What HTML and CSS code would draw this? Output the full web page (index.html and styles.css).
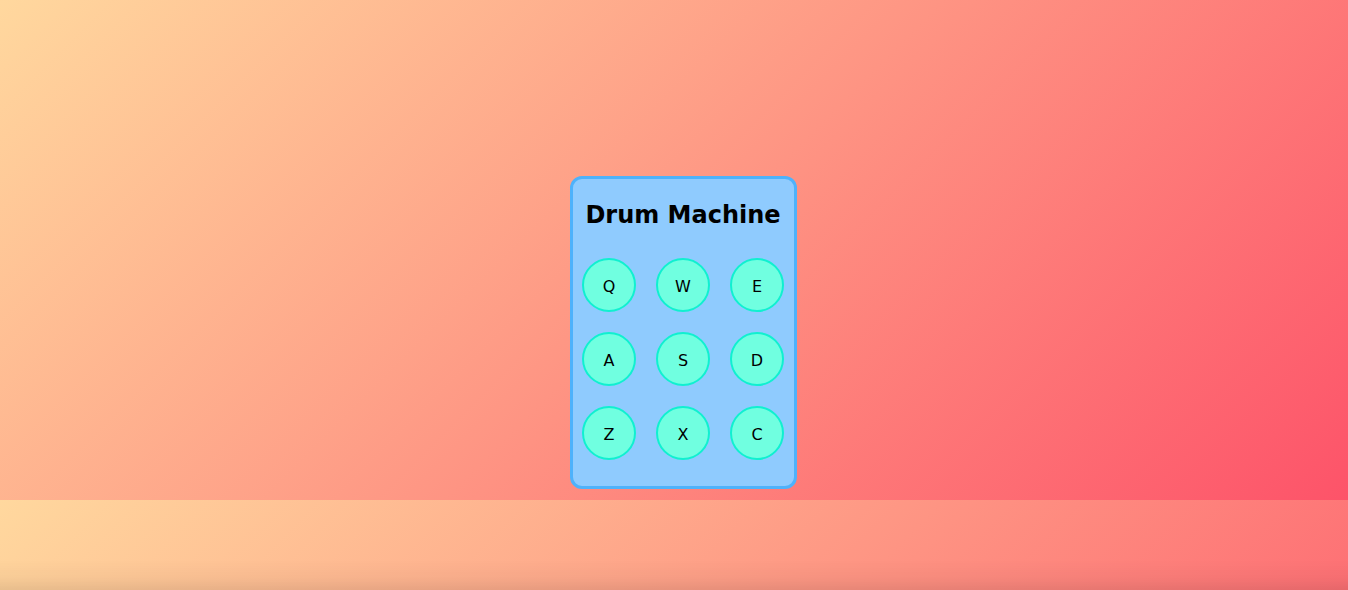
FILE: index.html
```html
<!DOCTYPE html>
<html lang="en">
<head>
<meta charset="utf-8">
<title>Drum Machine</title>
<link rel="stylesheet" href="styles.css">
</head>
<body>
<main class="stage">
  <section class="machine" id="drum-machine">
    <h1 class="title">Drum Machine</h1>
    <div class="pads">
      <button class="pad">Q</button>
      <button class="pad">W</button>
      <button class="pad">E</button>
      <button class="pad">A</button>
      <button class="pad">S</button>
      <button class="pad">D</button>
      <button class="pad">Z</button>
      <button class="pad">X</button>
      <button class="pad">C</button>
    </div>
  </section>
</main>
<div class="vignette"></div>
</body>
</html>
```

FILE: styles.css
```css
html {
  margin: 0;
  height: 100%;
  background-image: linear-gradient(135deg, #ffd89e 0%, #fd5369 100%);
  background-size: 100% 500px;
  background-repeat: repeat;
}

body {
  margin: 0;
  min-height: 100%;
  font-family: "DejaVu Sans", Verdana, sans-serif;
}

.stage {
  display: flex;
  justify-content: center;
  align-items: flex-start;
  padding: 176px 0 0 18px;
}

.machine {
  box-sizing: border-box;
  width: 227px;
  height: 313px;
  border: 3px solid #4eb2fb;
  border-radius: 12px;
  background: #8fcbfe;
  padding: 22px 0 0 0;
  display: flex;
  flex-direction: column;
  align-items: center;
}

.title {
  margin: 0;
  font-size: 24px;
  line-height: 28px;
  font-weight: bold;
  color: #000;
}

.pads {
  margin-top: 29px;
  display: grid;
  grid-template-columns: repeat(3, 54px);
  grid-auto-rows: 54px;
  gap: 20px;
}

.pad {
  box-sizing: border-box;
  width: 54px;
  height: 54px;
  padding: 3px 0 0 0;
  border: 2px solid #10f0d0;
  border-radius: 50%;
  background: #70ffe0;
  color: #000;
  font-family: "DejaVu Sans", Verdana, sans-serif;
  font-size: 16px;
  line-height: 1;
  cursor: pointer;
}

.vignette {
  position: fixed;
  left: 0;
  right: 0;
  bottom: 0;
  height: 30px;
  pointer-events: none;
  background: linear-gradient(to bottom, rgba(0, 0, 0, 0) 0%, rgba(0, 0, 0, 0.03) 60%, rgba(0, 0, 0, 0.09) 100%);
}
```
